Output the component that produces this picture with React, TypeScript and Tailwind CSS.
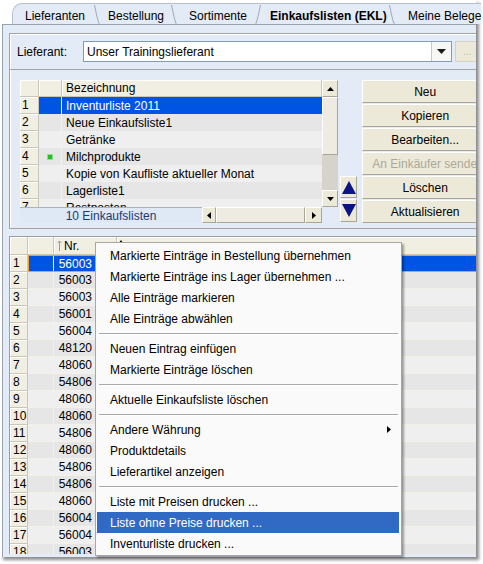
import React from 'react';

const font = "font-['Liberation_Sans',Arial,sans-serif]";
const raised =
  'border border-t-white border-l-white border-r-[#a9a696] border-b-[#a9a696] bg-[#ece9d8]';

type Dir = 'up' | 'down' | 'left' | 'right';

const Arrow = ({ dir, w, h, color }: { dir: Dir; w: number; h: number; color: string }) => {
  const pts = {
    up: `0,${h} ${w / 2},0 ${w},${h}`,
    down: `0,0 ${w},0 ${w / 2},${h}`,
    left: `${w},0 ${w},${h} 0,${h / 2}`,
    right: `0,0 ${w},${h / 2} 0,${h}`,
  }[dir];
  return (
    <svg width={w} height={h} viewBox={`0 0 ${w} ${h}`} className="block">
      <polygon points={pts} fill={color} />
    </svg>
  );
};

const TabSep = ({ flip }: { flip?: boolean }) => (
  <svg width="8" height="21" viewBox="0 0 8 21" className="shrink-0 block">
    <path
      d={flip ? 'M1 21 C3 19 5 8 6.5 1' : 'M1.5 1 C3 8 5 19 7 21'}
      fill="none"
      stroke="#9ea7b3"
      strokeWidth="1"
    />
  </svg>
);

const lists = [
  'Inventurliste 2011',
  'Neue Einkaufsliste1',
  'Getränke',
  'Milchprodukte',
  'Kopie von Kaufliste aktueller Monat',
  'Lagerliste1',
  'Restposten',
];

const numbers = [
  '56003', '56003', '56003', '56001', '56004', '48120', '48060', '54806', '48060',
  '48060', '54806', '48060', '54806', '54806', '48060', '56004', '56004', '56003',
];

const menu: (string | null)[] = [
  'Markierte Einträge in Bestellung übernehmen',
  'Markierte Einträge ins Lager übernehmen ...',
  'Alle Einträge markieren',
  'Alle Einträge abwählen',
  null,
  'Neuen Eintrag einfügen',
  'Markierte Einträge löschen',
  null,
  'Aktuelle Einkaufsliste löschen',
  null,
  'Andere Währung',
  'Produktdetails',
  'Lieferartikel anzeigen',
  null,
  'Liste mit Preisen drucken ...',
  'Liste ohne Preise drucken ...',
  'Inventurliste drucken ...',
];

const buttons = ['Neu', 'Kopieren', 'Bearbeiten...', 'An Einkäufer senden', 'Löschen', 'Aktualisieren'];

const headCell = 'bg-[#f1efe2] border-r border-b border-r-[#cbc7b8] border-b-[#cbc7b8] shadow-[inset_1px_1px_0_white]';

export default function App() {
  return (
    <div className={`${font} text-[12px] leading-none relative w-[483px] h-[564px] bg-white overflow-hidden text-black`}>
      <div className="w-[476px] h-[557px] flex flex-col bg-white shadow-[3px_3px_3px_0_rgba(0,0,0,0.45)]">
        {/* Tabs */}
        <div className="h-[24px] shrink-0 flex items-end">
          <div className="ml-[12px] h-[21px] flex-1 flex bg-[#e3ebf7] rounded-tl-[10px] border-t border-l border-[#b7c1cd]">
            <div className="w-[80px] pl-[12px] pt-[5px] leading-[14px] shrink-0">Lieferanten</div>
            <TabSep />
            <div className="w-[69px] pl-[7px] pt-[5px] leading-[14px] shrink-0">Bestellung</div>
            <TabSep />
            <div className="w-[76px] pl-[11px] pt-[5px] leading-[14px] shrink-0">Sortimente</div>
            <TabSep flip />
            <div className="w-[126px] pl-[8px] pt-[5px] leading-[14px] shrink-0 font-bold">Einkaufslisten (EKL)</div>
            <TabSep />
            <div className="flex-1 pl-[12px] pt-[5px] leading-[14px] whitespace-nowrap overflow-hidden">Meine Belege</div>
          </div>
        </div>

        {/* Panel */}
        <div className="flex-1 flex flex-col ml-[2px] border-l border-t border-[#98a2ae] bg-[#e3ebf7] pl-[6px] pt-[8px] pb-[3px] overflow-hidden">
          {/* Lieferant group */}
          <div className="h-[37px] w-[480px] shrink-0 border border-[#a3a3a3] shadow-[inset_1px_1px_0_white] flex pl-[7px] pt-[7px]">
            <div className="w-[66px] h-[21px] flex items-center">Lieferant:</div>
            <div className="w-[369px] h-[21px] flex border border-[#7f9db9] bg-white">
              <div className="flex-1 pl-[3px] flex items-center">Unser Trainingslieferant</div>
              <div className="w-[20px] border-l border-[#c8c8c8] bg-[#f7f7f5] flex items-center justify-center">
                <Arrow dir="down" w={9} h={5} color="#1a1a1a" />
              </div>
            </div>
            <div className="ml-[3px] w-[32px] h-[21px] border border-[#d6d2c2] bg-[#ece9d8] text-[#b9b6a8] text-[10px] flex items-center pl-[7px]">...</div>
          </div>

          {/* List group */}
          <div className="h-[159px] w-[480px] shrink-0 border border-[#a3a3a3] border-t-0 shadow-[inset_1px_0_0_white] flex pl-[10px] pt-[10px]">
            <div className="w-[318px] h-[143px] flex flex-col">
              <div className="h-[127px] flex">
                <div className="w-[302px] flex flex-col bg-[#efefef]">
                  <div className="h-[17px] flex shrink-0">
                    <div className={`w-[19px] ${headCell}`} />
                    <div className={`w-[23px] ${headCell}`} />
                    <div className={`flex-1 ${headCell} pl-[4px] flex items-center`}>Bezeichnung</div>
                  </div>
                  <div className="h-[110px] overflow-hidden">
                    {lists.map((name, i) => {
                      const sel = i === 0;
                      const bg = sel ? 'bg-[#0054e3] text-white' : i % 2 === 1 ? 'bg-[#e6e6e6]' : 'bg-[#efefef]';
                      return (
                        <div key={name} className="h-[17px] flex">
                          <div className={`w-[19px] ${headCell} pl-[2px] flex items-center`}>{i + 1}</div>
                          <div className={`w-[23px] ${bg} border-r border-[#f4f2e8] flex items-center justify-center`}>
                            {i === 3 && <div className="w-[4px] h-[4px] bg-[#22c022] shadow-[0_0_0_1px_#8fe08f]" />}
                          </div>
                          <div className={`flex-1 ${bg} pl-[4px] flex items-center whitespace-nowrap overflow-hidden`}>{name}</div>
                        </div>
                      );
                    })}
                  </div>
                </div>
                {/* vertical scrollbar */}
                <div className="w-[16px] flex flex-col">
                  <div className={`h-[17px] ${raised} flex items-center justify-center`}>
                    <Arrow dir="up" w={7} h={4} color="#000" />
                  </div>
                  <div className={`h-[58px] ${raised} bg-[#eeece2]`} />
                  <div className="h-[35px] bg-[#d6d3cb]" />
                  <div className={`h-[17px] ${raised} flex items-center justify-center`}>
                    <Arrow dir="down" w={7} h={4} color="#000" />
                  </div>
                </div>
              </div>
              <div className="h-[16px] flex">
                <div className="w-[182px] bg-[#dfe8f5] border-t border-[#a9b3c0] text-[#1c3a70] flex items-center justify-center">10 Einkaufslisten</div>
                <div className={`w-[14px] ${raised} flex items-center justify-center`}>
                  <Arrow dir="left" w={4} h={7} color="#000" />
                </div>
                <div className={`w-[89px] ${raised} bg-[#eeece2]`} />
                <div className={`w-[17px] ${raised} flex items-center justify-center`}>
                  <Arrow dir="right" w={4} h={7} color="#000" />
                </div>
                <div className="w-[16px]" />
              </div>
            </div>

            {/* move arrows */}
            <div className="ml-[2px] w-[20px] h-[143px] flex flex-col justify-end gap-[1px] pb-[1px]">
              <div className={`h-[22px] ${raised} flex items-center justify-center`}>
                <Arrow dir="up" w={14} h={13} color="#0a1486" />
              </div>
              <div className={`h-[23px] ${raised} flex items-center justify-center`}>
                <Arrow dir="down" w={14} h={13} color="#0a1486" />
              </div>
            </div>

            {/* action buttons */}
            <div className="ml-[5px] w-[145px] flex flex-col gap-[1px]">
              {buttons.map((b) => (
                <div
                  key={b}
                  className={`h-[23px] ${raised} flex items-center justify-center whitespace-nowrap ${
                    b.startsWith('An ') ? 'text-[#aca899] justify-start pl-[9px]' : ''
                  }`}
                >
                  {b}
                </div>
              ))}
            </div>
          </div>

          {/* Lower table */}
          <div className="mt-[7px] flex-1 w-[480px] flex flex-col border-l border-t border-[#9c9c9c] bg-[#efefef] overflow-hidden">
            <div className="h-[18px] shrink-0 flex">
              <div className={`w-[18px] ${headCell}`} />
              <div className={`w-[26px] ${headCell}`} />
              <div className={`w-[63px] ${headCell} flex items-center pl-[3px]`}>
                <svg width="5" height="11" viewBox="0 0 5 11" className="block">
                  <path d="M2.5 11 V1 M0.5 3 L2.5 1 L4.5 3" fill="none" stroke="#9a9a9a" strokeWidth="1" />
                </svg>
                <span className="ml-[2px]">Nr.</span>
              </div>
              <div className={`flex-1 ${headCell} pl-[2px] pt-[3px]`}>
                <Arrow dir="up" w={4} h={3} color="#000" />
              </div>
            </div>
            <div className="flex-1 overflow-hidden">
              {numbers.map((n, i) => {
                const sel = i === 0;
                const bg = sel ? 'bg-[#0054e3] text-white' : i % 2 === 1 ? 'bg-[#e6e6e6]' : 'bg-[#efefef]';
                return (
                  <div key={i} className="h-[17px] flex">
                    <div className={`w-[18px] ${headCell} pl-[3px] flex items-center`}>{i + 1}</div>
                    <div
                      className={`flex flex-1 ${sel ? 'border-y border-[#f0a030]' : 'border-b border-[#f4f2e8]'}`}
                    >
                      <div className={`w-[26px] ${bg} ${sel ? 'border-l border-[#f0a030]' : ''} border-r border-r-[#f4f2e8]`} />
                      <div className={`w-[63px] ${bg} pr-[25px] flex items-center justify-end`}>{n}</div>
                      <div className={`flex-1 ${bg}`} />
                    </div>
                  </div>
                );
              })}
            </div>
          </div>
        </div>
      </div>

      {/* Context menu */}
      <div className="absolute left-[95px] top-[242px] w-[307px] bg-[#fafafa] border border-[#a7a7a7] shadow-[2px_2px_2px_rgba(0,0,0,0.35)] pt-[2px] pb-[1px] px-[1px]">
        {menu.map((item, i) =>
          item === null ? (
            <div key={i} className="h-[9px] flex items-center px-[2px]">
              <div className="w-full h-[2px] border-t border-[#a9a9a9] border-b border-b-white" />
            </div>
          ) : (
            <div
              key={i}
              className={`h-[21px] flex items-center pl-[13px] pr-[9px] ${
                item === 'Liste ohne Preise drucken ...' ? 'bg-[#316ac5] text-white mr-[1px]' : ''
              }`}
            >
              <span className="flex-1">{item}</span>
              {item === 'Andere Währung' && <Arrow dir="right" w={4} h={7} color="#000" />}
            </div>
          ),
        )}
      </div>
    </div>
  );
}
